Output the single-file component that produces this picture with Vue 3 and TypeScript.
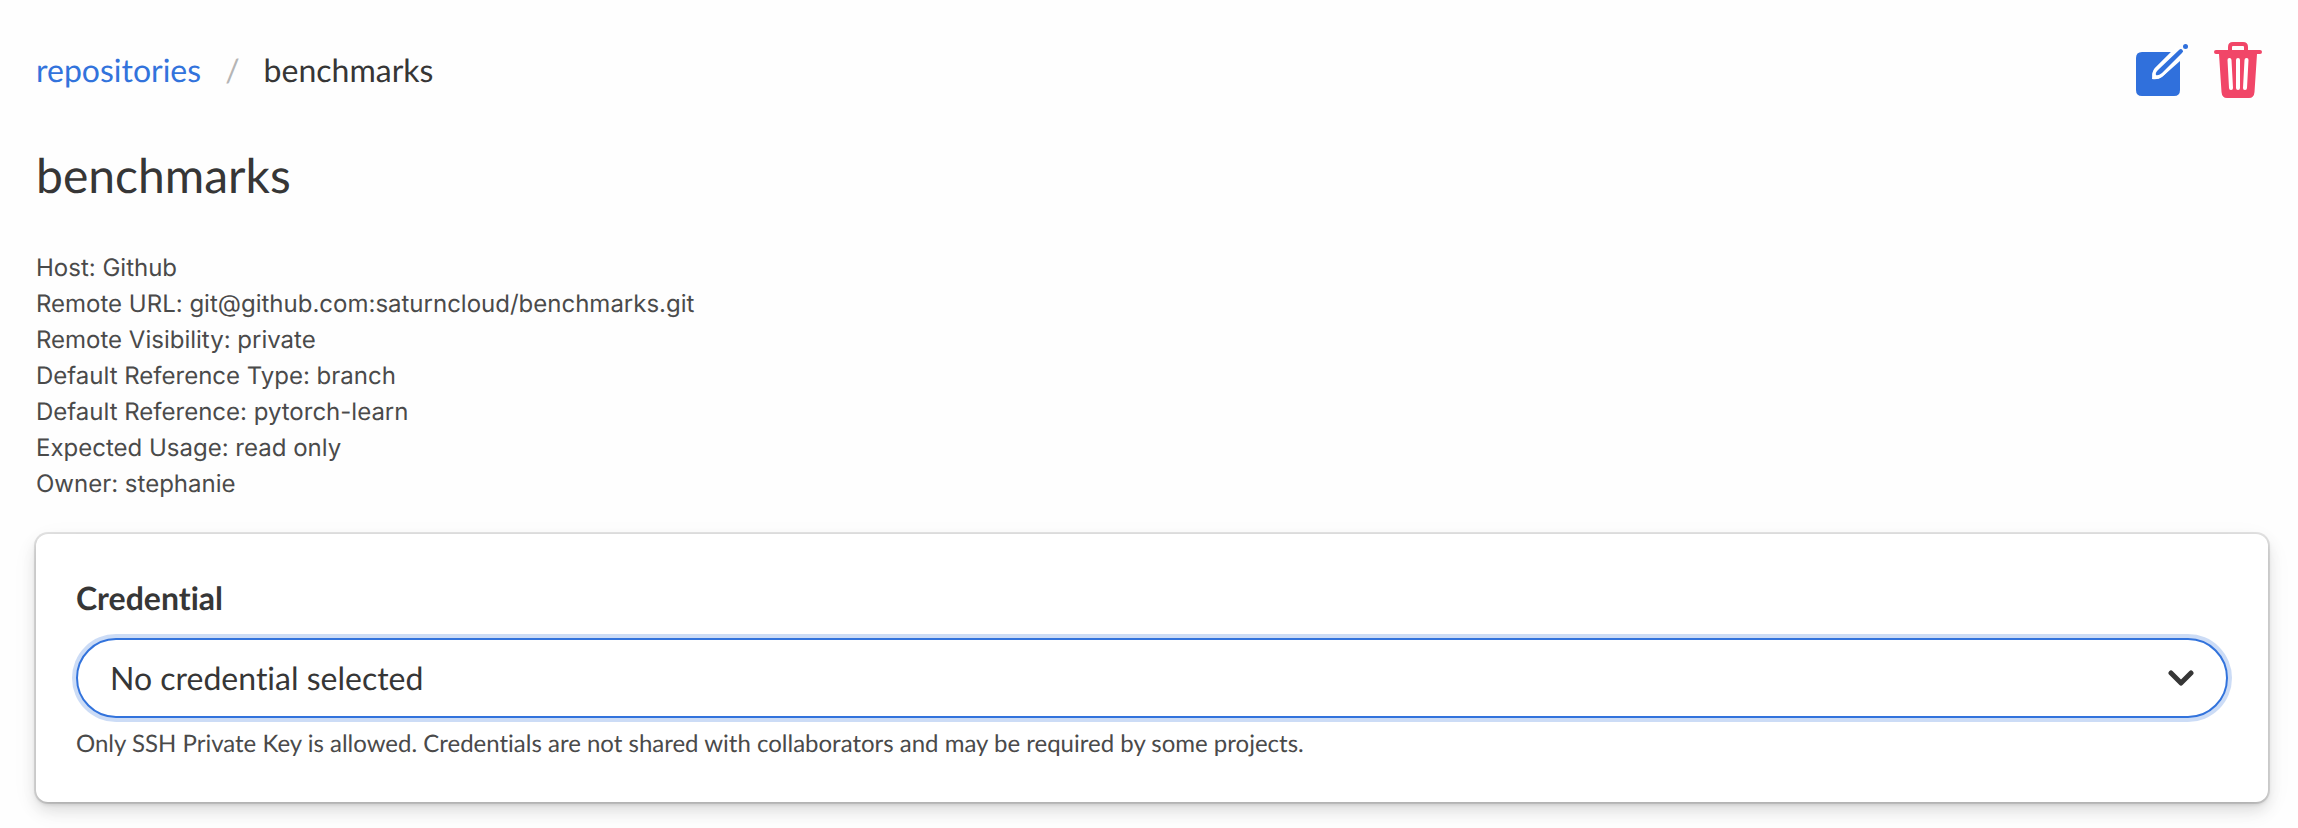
<script setup lang="ts">
import { ref } from 'vue'

interface Detail {
  label: string
  value: string
}

const details: Detail[] = [
  { label: 'Host', value: 'Github' },
  { label: 'Remote URL', value: 'git@github.com:saturncloud/benchmarks.git' },
  { label: 'Remote Visibility', value: 'private' },
  { label: 'Default Reference Type', value: 'branch' },
  { label: 'Default Reference', value: 'pytorch-learn' },
  { label: 'Expected Usage', value: 'read only' },
  { label: 'Owner', value: 'stephanie' },
]

const credential = ref('')
</script>

<template>
  <main class="page">
    <header class="topbar">
      <nav class="breadcrumb" aria-label="Breadcrumb">
        <a href="#repositories">repositories</a>
        <span class="divider" aria-hidden="true">/</span>
        <span aria-current="page">benchmarks</span>
      </nav>
      <div class="actions">
        <button type="button" class="action edit" aria-label="Edit repository">
          <svg width="52" height="56" viewBox="0 0 52 56" aria-hidden="true">
            <path fill="currentColor" d="M6 10H36L18 28Q16 32 16 37Q22 38 26 35L44 19V48Q44 54 38 54H6Q0 54 0 48V16Q0 10 6 10Z" />
            <path fill="none" stroke="#fff" stroke-width="3" d="M41 6L20 27Q17 31 18 35Q23 36 27 32L47 12" />
            <path fill="currentColor" d="M43 8Q45 6 46.500 8Q48 9.500 46 11L26 31Q22 34 20 33Q19 31 22 28Z" />
            <circle cx="49.500" cy="4.500" r="2.500" fill="currentColor" />
          </svg>
        </button>
        <button type="button" class="action delete" aria-label="Delete repository">
          <svg width="48" height="56" viewBox="0 0 48 56" aria-hidden="true">
            <path fill="currentColor" d="M2 8H46Q48 8 48 10T46 12H43L40.500 50Q40 56 35 56H13Q8 56 7.500 50L5 12H2Q0 12 0 10T2 8Z" />
            <path fill="none" stroke="currentColor" stroke-width="4" d="M16 10V5Q16 2 19 2H29Q32 2 32 5V10" />
            <path fill="none" stroke="#fff" stroke-width="4" stroke-linecap="round" d="M15.500 18L17 46M24 18V46M32.500 18L31 46" />
          </svg>
        </button>
      </div>
    </header>

    <h1 class="title">benchmarks</h1>

    <ul class="details">
      <li v-for="item in details" :key="item.label">{{ item.label }}: {{ item.value }}</li>
    </ul>

    <section class="box">
      <label class="label" for="credential">Credential</label>
      <div class="select-wrap">
        <select id="credential" v-model="credential" class="select" aria-describedby="credential-help">
          <option value="">No credential selected</option>
        </select>
        <svg class="chevron" width="28" height="16" viewBox="0 0 28 16" aria-hidden="true">
          <path d="M3 3L13 13L23 3" fill="none" stroke="currentColor" stroke-width="5" stroke-linecap="round" stroke-linejoin="round" />
        </svg>
      </div>
      <p id="credential-help" class="help">
        Only SSH Private Key is allowed. Credentials are not shared with collaborators and may be required by some projects.
      </p>
    </section>
  </main>
</template>

<style>
body {
  background: #fefefe;
}
</style>

<style scoped>
.page {
  padding: 40px 30px 26px 36px;
  color: #363636;
  font-family: Lato, "Liberation Sans", sans-serif;
  font-size: 32px;
  line-height: 48px;
  font-variant-ligatures: none;
  text-rendering: geometricPrecision;
}

.topbar {
  display: flex;
  align-items: center;
  justify-content: space-between;
  height: 60px;
}

.breadcrumb {
  display: flex;
  gap: 24px;
}

.breadcrumb a {
  color: #3273dc;
  text-decoration: none;
}

.divider {
  color: #b5b5b5;
}

.actions {
  display: flex;
  gap: 26px;
  padding-right: 6px;
}

.action {
  display: block;
  padding: 0;
  border: 0;
  background: none;
  cursor: pointer;
}

.action svg {
  display: block;
}

.edit {
  color: #3070dc;
}

.delete {
  color: #f14668;
}

.title {
  margin: 48px 0 46px;
  font-size: 48px;
  font-weight: 400;
  line-height: 56px;
}

.details {
  margin: 0;
  padding: 0;
  list-style: none;
  color: #4a4a4a;
  font-family: Inter, "Liberation Sans", sans-serif;
  font-size: 24px;
  line-height: 36px;
}

.box {
  margin-top: 32px;
  padding: 40px;
  border-radius: 12px;
  background: #fff;
  box-shadow:
    0 0 0 2px rgba(10, 10, 10, 0.1),
    0 2px 4px rgba(10, 10, 10, 0.14),
    0 8px 16px rgba(10, 10, 10, 0.12),
    0 8px 32px rgba(10, 10, 10, 0.04);
}

.label {
  display: block;
  margin-bottom: 16px;
  font-weight: 700;
}

.select-wrap {
  position: relative;
}

.select {
  display: block;
  width: 100%;
  height: 80px;
  padding: 0 80px 0 32px;
  border: 2px solid #3273dc;
  border-radius: 40px;
  outline: 0;
  appearance: none;
  background: #fff;
  box-shadow: 0 0 0 4px rgba(50, 115, 220, 0.25);
  color: inherit;
  font: inherit;
  font-variant-ligatures: none;
  text-rendering: inherit;
}

.chevron {
  position: absolute;
  top: 32px;
  right: 32px;
  pointer-events: none;
}

.help {
  margin: 8px 0 0;
  color: #4a4a4a;
  font-size: 24px;
  line-height: 36px;
}
</style>
